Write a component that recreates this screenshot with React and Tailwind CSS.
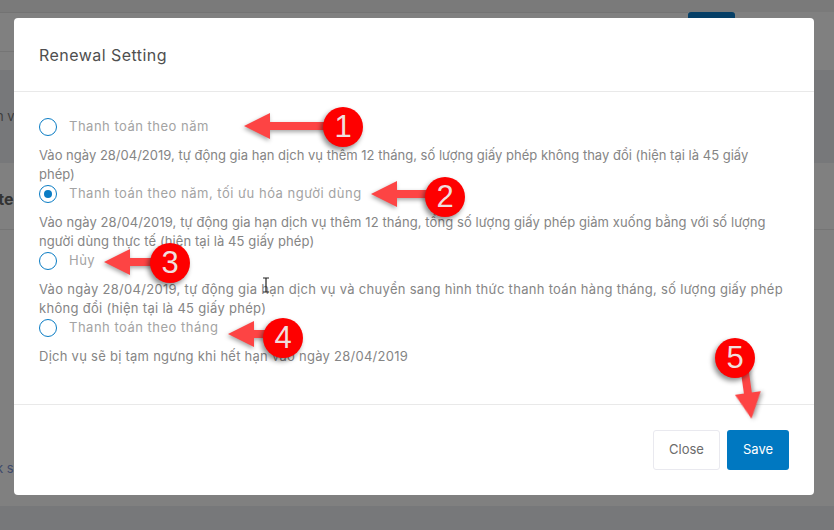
import React from 'react'

const options = [
  {
    label: 'Thanh toán theo năm',
    text: 'Vào ngày 28/04/2019, tự động gia hạn dịch vụ thêm 12 tháng, số lượng giấy phép không thay đổi (hiện tại là 45 giấy phép)',
    textClass: 'max-w-[725px] tracking-[0.01px]',
  },
  {
    label: 'Thanh toán theo năm, tối ưu hóa người dùng',
    text: 'Vào ngày 28/04/2019, tự động gia hạn dịch vụ thêm 12 tháng, tổng số lượng giấy phép giảm xuống bằng với số lượng người dùng thực tế (hiện tại là 45 giấy phép)',
    textClass: 'tracking-[0.09px]',
    checked: true,
  },
  {
    label: 'Hủy',
    text: 'Vào ngày 28/04/2019, tự động gia hạn dịch vụ và chuyển sang hình thức thanh toán hàng tháng, số lượng giấy phép không đổi (hiện tại là 45 giấy phép)',
    textClass: 'tracking-[0.3px]',
  },
  {
    label: 'Thanh toán theo tháng',
    text: 'Dịch vụ sẽ bị tạm ngưng khi hết hạn vào ngày 28/04/2019',
    textClass: 'tracking-[0.26px]',
  },
]

function Radio({ checked }) {
  return (
    <span className="flex h-[18px] w-[18px] shrink-0 items-center justify-center rounded-full border border-[#0a7cc4] bg-white">
      {checked && <span className="h-2 w-2 rounded-full bg-[#0a7cc4]" />}
    </span>
  )
}

function Option({ label, text, textClass, checked }) {
  return (
    <div>
      <div className="flex h-[18px] items-center gap-[12px]">
        <Radio checked={checked} />
        <span className="text-[13px] tracking-[0.5px] text-[#a3a3a3]">{label}</span>
      </div>
      <p className={`mt-[10px] text-[13px] leading-[19px] text-[#858585] ${textClass}`}>{text}</p>
    </div>
  )
}

function Badge({ n, className }) {
  return (
    <div className={`absolute flex h-10 w-10 items-center justify-center rounded-full bg-[#fe0000] font-['Liberation_Sans',sans-serif] text-[31px] text-[#f0dede] shadow-[-2px_3px_5px_rgba(0,0,0,0.45)] ${className}`}>
      {n}
    </div>
  )
}

// arrow drawn pointing left, rotated for #5
function Arrow({ className, width, head = 26 }) {
  const h = 26
  return (
    <svg className={`absolute drop-shadow-[-1px_2px_2px_rgba(0,0,0,0.35)] ${className}`} width={width} height={h} viewBox={`0 0 ${width} ${h}`}>
      <path d={`M0 13 L${head} 0 L${head} 9 L${width} 9 L${width} 17 L${head} 17 L${head} 26 Z`} fill="#fd4444" />
    </svg>
  )
}

export default function App() {
  return (
    <div className="relative flex h-[530px] w-[834px] flex-col overflow-hidden bg-[#7f7f7f] font-['Inter','Open_Sans',sans-serif]">
      {/* dimmed page behind the dialog */}
      <div className="h-[12px] bg-[#7a7a7a]" />
      <div className="relative h-[58px] bg-[#808080]">
        <div className="h-px w-[688px] bg-[#737373]" />
        <div className="mt-[38px] h-px w-[60px] bg-[#757575]" />
        <div className="absolute left-[688px] top-0 h-[20px] w-[47px] rounded-t-[3px] bg-[#063f66]" />
      </div>
      <div className="flex h-[93px] items-center bg-[#77787a] text-[13px] text-[#3d3d3d]">
        <span className="-ml-[4px] mt-[1px]">n v</span>
      </div>
      <div className="flex h-[67px] items-center border-b border-[#757575] bg-[#808080] text-[16px] font-bold text-[#333]">
        <span className="-ml-[6px] mt-[6px]">ite</span>
      </div>
      <div className="flex h-[276px] items-end bg-[#808080] pb-[28px] text-[13px] text-[#3e4a6b]">
        <span className="-ml-[4px]">k s</span>
      </div>
      <div className="flex-1 bg-[#77787a]" />

      {/* dialog */}
      <div className="absolute left-[14px] top-[18px] flex h-[477px] w-[800px] flex-col rounded-[4px] bg-white">
        <div className="flex h-[74px] shrink-0 items-center border-b border-[#e9e9e9] pl-[25px]">
          <h2 className="text-[16px] leading-none tracking-[0.45px] text-[#4f4f4f]">Renewal Setting</h2>
        </div>
        <div className="flex h-[313px] shrink-0 flex-col gap-[1px] border-b border-[#e9e9e9] px-[25px] pt-[26px]">
          {options.map((o) => (
            <Option key={o.label} {...o} />
          ))}
        </div>
        <div className="flex flex-1 items-start justify-end gap-[7px] pr-[25px] pt-[25px]">
          <button className="h-10 w-[67px] rounded-[3px] border border-[#e9e9ef] bg-white text-[13px] text-[#6b6b6b]">Close</button>
          <button className="h-10 w-[62px] rounded-[3px] bg-[#0078c1] text-[13px] text-white">Save</button>
        </div>
      </div>

      {/* annotations over the screenshot */}
      <Arrow className="left-[244px] top-[113px]" width={85} />
      <Badge n="1" className="left-[323px] top-[107px]" />
      <Arrow className="left-[371px] top-[181px]" width={60} />
      <Badge n="2" className="left-[425px] top-[177px]" />
      <Arrow className="left-[104px] top-[249px]" width={52} />
      <Badge n="3" className="left-[150px] top-[243px]" />
      <Arrow className="left-[228px] top-[321px]" width={44} />
      <Badge n="4" className="left-[263px] top-[318px]" />
      <Arrow className="left-[723px] top-[381px] -rotate-[98deg]" width={50} />
      <Badge n="5" className="left-[715px] top-[338px]" />

      {/* text cursor */}
      <svg className="absolute left-[262px] top-[277px]" width="8" height="16" viewBox="0 0 8 16">
        <path d="M1 1 H7 M4 1 V15 M1 15 H7" stroke="#222" strokeWidth="1.2" fill="none" />
      </svg>
    </div>
  )
}
